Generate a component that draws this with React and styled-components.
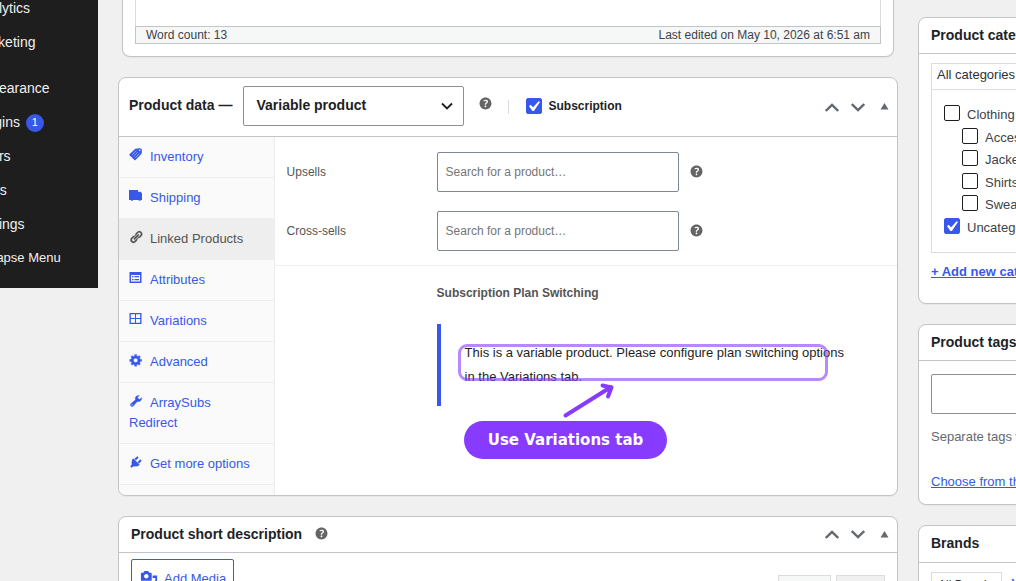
import React from "react";
import styled, { createGlobalStyle } from "styled-components";

const GlobalStyle = createGlobalStyle`
  *, *::before, *::after { box-sizing: border-box; }
  body {
    margin: 0;
    background: #f0f0f0;
    color: #3c434a;
    font: 13px/20px "Liberation Sans", Arial, sans-serif;
    overflow: hidden;
  }
  ul, h2, p { margin: 0; padding: 0; list-style: none; }
`;

const blue = "#3858e9";
const line = "#c3c4c7";

const Screen = styled.div`
  display: grid;
  grid-template-columns: 98px 780px 250px;
  column-gap: 20px;
  align-items: start;
  width: 1016px;
  height: 581px;
  overflow: hidden;
`;

/* Admin menu */
const AdminMenu = styled.nav`
  height: 288px;
  background: #1e1e1e;
  overflow: hidden;
`;
const MenuList = styled.ul`
  margin: -9px 0 0 -26px;
`;
const MenuItem = styled.li`
  display: flex;
  align-items: center;
  height: 34px;
  margin-top: ${(p) => (p.$spaced ? "12px" : 0)};
  color: #f0f0f1;
  font-size: ${(p) => (p.$small ? "13px" : "14px")};
  white-space: nowrap;
`;
const Count = styled.span`
  width: 18px;
  height: 18px;
  margin: 1px 0 0 6px;
  border-radius: 9px;
  background: ${blue};
  color: #fff;
  font-size: 11px;
  line-height: 17px;
  text-align: center;
`;

/* Boxes */
const MainColumn = styled.main`
  display: flex;
  flex-direction: column;
  gap: 20px;
`;
const SideColumn = styled.aside`
  display: flex;
  flex-direction: column;
  gap: 20px;
  padding-top: 17px;
`;
const Panel = styled.section`
  flex: none;
  height: ${(p) => p.$height}px;
  border: 1px solid ${line};
  border-radius: 8px;
  background: #fff;
  box-shadow: 0 1px 1px rgba(0, 0, 0, 0.04);
  overflow: hidden;
`;
const PanelHeader = styled.header`
  display: flex;
  align-items: center;
  height: ${(p) => p.$height || 36}px;
  padding-left: ${(p) => p.$inset || 12}px;
  border-bottom: 1px solid ${line};
`;
const Title = styled.h2`
  margin-top: ${(p) => p.$lift || -2}px;
  color: #1d2327;
  font-size: 14px;
  font-weight: 700;
  line-height: 20px;
  white-space: nowrap;
`;
const EditorPanel = styled(Panel)`
  margin: 0 4px;
  padding: 0 12px;
  border-top: 0;
  border-radius: 0 0 8px 8px;
`;
const EditorArea = styled.div`
  height: 26px;
  border: solid #dcdcde;
  border-width: 0 1px;
`;
const StatusBar = styled.div`
  display: flex;
  justify-content: space-between;
  height: 18px;
  padding: 0 10px;
  border: 1px solid ${line};
  background: #f6f7f7;
  color: #3c434a;
  font-size: 12px;
  line-height: 16px;
`;

/* Header controls */
const TypeSelect = styled.div`
  display: flex;
  align-items: center;
  justify-content: space-between;
  width: 221px;
  height: 40px;
  margin: -2px 15px 0 11px;
  padding: 0 10px 0 12px;
  border: 1px solid #8c8f94;
  border-radius: 2px;
  color: #1e1e1e;
  font-size: 14px;
  font-weight: 700;
  line-height: 20px;
  span { margin-top: -2px; }
`;
const Separator = styled.span`
  width: 1px;
  height: 14px;
  margin: 0 17px 0 16px;
  background: #dcdcde;
`;
const SubscriptionLabel = styled.label`
  display: flex;
  align-items: center;
  gap: 6px;
  margin-top: -2px;
  color: #1d2327;
  font-size: 12px;
  font-weight: 700;
`;
const HandleActions = styled.div`
  display: flex;
  align-items: center;
  gap: 12px;
  margin: 0 8px 0 auto;
  color: #646970;
  svg:last-child { margin: -1px 0 0 3px; }
`;
const HelpSvg = styled.svg`
  flex: none;
  display: block;
  width: 17px;
  height: 17px;
  margin: ${(p) => p.$margin || 0};
  fill: #646464;
`;
const Check = styled.span`
  flex: none;
  display: block;
  width: 16px;
  height: 16px;
  border: 1px solid ${(p) => (p.$on ? blue : "#1e1e1e")};
  border-radius: 2px;
  background: ${(p) => (p.$on ? blue : "#fff")};
  svg { display: block; width: 21px; height: 21px; margin: -3px 0 0 -4px; fill: #fff; }
`;

/* Product data */
const ProductBody = styled.div`
  display: grid;
  grid-template-columns: 156px 1fr;
  height: 358px;
`;
const Tabs = styled.ul`
  border-right: 1px solid #eee;
  background: #fafafa;
`;
const Tab = styled.li`
  padding: 10px 20px 10px 10px;
  border-bottom: 1px solid #eee;
  background: ${(p) => (p.$active ? "#eee" : "transparent")};
  color: ${(p) => (p.$active ? "#555" : blue)};
  svg {
    display: inline-block;
    width: 13px;
    height: 13px;
    margin-right: 8px;
    vertical-align: 0;
    fill: currentColor;
  }
  svg[viewBox="0 0 20 20"] {
    width: 14px;
    height: 14px;
    margin: 0 7.500px 0 -0.500px;
    vertical-align: -0.500px;
    stroke: currentColor;
    stroke-width: 0.4px;
  }
`;
const Fields = styled.div`
  display: flex;
  flex-direction: column;
  gap: 19px;
  padding: 15px 0 14px 11.6px;
  border-bottom: 1px solid #eee;
`;
const Field = styled.div`
  display: grid;
  grid-template-columns: 150.4px 242px 17px;
  align-items: center;
  color: #555;
  font-size: 12px;
`;
const SearchBox = styled.div`
  height: 40px;
  padding: 0 7.6px;
  border: 1px solid #7e8993;
  border-radius: 2px;
  color: #757575;
  line-height: 38px;
`;
const Switching = styled.div`
  padding: 17px 0 0 161px;
`;
const SwitchingTitle = styled.p`
  padding-left: 0.6px;
  color: #555;
  font-size: 12px;
  font-weight: 700;
`;
const Notice = styled.div`
  position: relative;
  height: 82px;
  margin: 21px 0 0 1px;
  padding: 17px 23.6px;
  border-left: 4px solid ${blue};
  color: #1e1e1e;
  line-height: 24px;
  white-space: nowrap;
`;
const Highlight = styled.span`
  position: absolute;
  left: 17px;
  top: 20px;
  width: 370px;
  height: 37px;
  border: 3px solid rgba(134, 59, 255, 0.6);
  border-radius: 9px;
`;
const Arrow = styled.svg`
  position: absolute;
  left: 119px;
  top: 56px;
  width: 60px;
  height: 40px;
  fill: none;
  stroke: #863bff;
  stroke-width: 4;
  stroke-linecap: round;
  stroke-linejoin: round;
`;
const Callout = styled.span`
  position: absolute;
  left: 23px;
  top: 97px;
  width: 203px;
  height: 38px;
  border-radius: 19px;
  background: #863bff;
  color: #fff;
  font: 700 15px/38px "DejaVu Sans", sans-serif;
  text-align: center;
`;

/* Short description editor */
const EditorTools = styled.div`
  display: flex;
  align-items: flex-start;
  padding: 6px 12px 0;
`;
const MediaButton = styled.div`
  display: flex;
  align-items: center;
  width: 103px;
  height: 40px;
  padding: 0 8px;
  border: 1px solid ${blue};
  border-radius: 2px;
  color: ${blue};
  white-space: nowrap;
  svg { flex: none; width: 18px; height: 18px; margin-right: 6px; fill: currentColor; }
`;
const EditorTabs = styled.div`
  display: flex;
  gap: 5px;
  margin: 16px 0 0 auto;
`;
const EditorTab = styled.span`
  width: ${(p) => p.$width}px;
  height: 28px;
  border: 1px solid #dcdcde;
  background: ${(p) => (p.$active ? "#f6f7f7" : "#f0f0f1")};
`;

/* Side boxes */
const SideBody = styled.div`
  padding: ${(p) => p.$top}px 12px 0;
  white-space: nowrap;
`;
const CategoryTabs = styled.div`
  height: 26px;
  padding: 1px 5px;
  border: 1px solid #dcdcde;
  border-bottom: 0;
  color: #2c3338;
`;
const CategoryBox = styled.ul`
  height: 164px;
  padding: 12px 12px;
  border: 1px solid #dcdcde;
`;
const Category = styled.li`
  display: flex;
  align-items: center;
  gap: 7px;
  height: 22.5px;
  margin-left: ${(p) => (p.$child ? 18 : 0)}px;
  span + span { padding-top: 4px; }
`;
const SideLink = styled.a`
  display: block;
  margin-top: ${(p) => p.$top}px;
  color: ${blue};
  font-weight: ${(p) => (p.$bold ? 700 : 400)};
  text-decoration: underline;
`;
const TagInput = styled.div`
  height: 40px;
  border: 1px solid #8c8f94;
  border-radius: 2px;
`;
const Hint = styled.p`
  margin-top: 13px;
  color: #646970;
`;
const BrandTabs = styled.div`
  display: flex;
  gap: 9px;
  color: ${blue};
  font-size: 12px;
  line-height: 24px;
`;
const BrandTab = styled.span`
  width: 71px;
  height: 30px;
  padding: 0 6px;
  border: 1px solid #dcdcde;
  color: #2c3338;
`;

const Help = ({ margin }) => (
  <HelpSvg viewBox="0 0 20 20" $margin={margin}>
    <path d="M17 10c0-3.87-3.14-7-7-7-3.87 0-7 3.13-7 7s3.13 7 7 7c3.86 0 7-3.13 7-7zm-6.3 1.48H9.14v-.43c0-.38.08-.7.24-.98s.46-.57.88-.89c.41-.29.68-.53.81-.71.14-.18.2-.39.2-.62 0-.25-.09-.44-.28-.58-.19-.13-.45-.19-.79-.19-.58 0-1.25.19-2 .57l-.64-1.28c.87-.49 1.8-.74 2.77-.74.81 0 1.45.2 1.92.58.48.39.71.91.71 1.55 0 .43-.09.8-.29 1.11-.19.32-.57.67-1.11 1.06-.38.28-.61.49-.71.63-.1.15-.15.34-.15.57v.35zm-1.47 2.74c-.18-.17-.27-.42-.27-.73 0-.33.08-.58.26-.75s.43-.25.77-.25c.32 0 .57.09.75.26s.27.42.27.74c0 .3-.09.55-.27.72-.18.18-.43.27-.75.27-.33 0-.58-.09-.76-.26z" />
  </HelpSvg>
);

const Checkbox = ({ on }) => (
  <Check $on={on}>
    {on && (
      <svg viewBox="0 0 20 20">
        <path d="M14.83 4.89l1.34.94-5.81 8.38H9.02L5.78 9.67l1.34-1.25 2.57 2.4z" />
      </svg>
    )}
  </Check>
);

const Handles = () => (
  <HandleActions>
    <svg width="14" height="9" viewBox="0 0 14 9" fill="none" stroke="currentColor" strokeWidth="2.4">
      <path d="M.8 8 7 2l6.200 6" />
    </svg>
    <svg width="14" height="9" viewBox="0 0 14 9" fill="none" stroke="currentColor" strokeWidth="2.4">
      <path d="M.8 1 7 7l6.200-6" />
    </svg>
    <svg width="9" height="7" viewBox="0 0 9 7" fill="currentColor">
      <path d="M4.500 0 8.500 6.500h-8z" />
    </svg>
  </HandleActions>
);

const icons = {
  tag: (
    <svg viewBox="0 0 13 13">
      <path d="M0 6.700 6.300.7 9.400.5 10.300 0 12.700 1 12.900 4.200 12.400 6 6 12.500z" />
      <path d="M3 6.800 7.300 2.700M4.600 8.300 8.700 4.200M6.200 9.800l4.300-4.200" stroke="#fafafa" strokeOpacity=".65" strokeWidth=".7" fill="none" />
      <circle cx="10.700" cy="2.300" r=".8" fill="#fafafa" />
    </svg>
  ),
  truck: (
    <svg viewBox="0 0 13 13">
      <path d="M0 1h9v1.800h2.700L13.300 5V11h-1.500a1.200 1.200 0 0 1-2.300 0H4.200a1.200 1.200 0 0 1-2.300 0H0z" />
    </svg>
  ),
  link: (
    <svg viewBox="0 0 20 20">
      <path d="M17.740 2.760c1.680 1.690 1.680 4.410 0 6.100l-1.530 1.520c-1.120 1.120-2.700 1.470-4.140 1.090l2.620-2.610.76-.77.76-.76c.84-.84.84-2.200 0-3.040-.84-.85-2.200-.85-3.040 0l-.77.76-3.380 3.380c-.37-1.440-.02-3.020 1.100-4.140l1.520-1.530c1.690-1.680 4.420-1.680 6.100 0zM8.590 13.430l5.340-5.340c.42-.42.42-1.100 0-1.520-.44-.43-1.130-.39-1.530 0l-5.330 5.340c-.42.42-.42 1.100 0 1.520.44.43 1.130.39 1.520 0zm-.76 2.290l4.140-4.150c.38 1.440.03 3.020-1.090 4.140l-1.520 1.530c-1.690 1.680-4.410 1.680-6.100 0-1.680-1.680-1.680-4.420 0-6.100l1.530-1.520c1.120-1.120 2.700-1.470 4.140-1.100l-4.140 4.150c-.85.84-.85 2.200 0 3.050.84.84 2.200.84 3.040 0z" />
    </svg>
  ),
  list: (
    <svg viewBox="0 0 13 13">
      <path fillRule="evenodd" d="M.5 1h12v11H.5zM2 4v6.500h9V4zm1 1h1.500v1.200H3zm2.500 0H10v1.200H5.500zM3 8h1.500v1.200H3zm2.500 0H10v1.200H5.500z" />
    </svg>
  ),
  grid: (
    <svg viewBox="0 0 13 13">
      <path fillRule="evenodd" d="M.5 1h12v11H.5zM1.800 2.300V6H6V2.300zm5.200 0V6h4.200V2.300zM1.800 7v3.700H6V7zm5.200 0v3.700h4.200V7z" />
    </svg>
  ),
  gear: (
    <svg viewBox="0 0 20 20">
      <path d="M18 12h-2.180c-.17.7-.44 1.350-.81 1.930l1.540 1.540-2.100 2.100-1.540-1.540c-.58.36-1.230.63-1.910.79V19H8v-2.180c-.68-.16-1.330-.43-1.910-.79l-1.540 1.540-2.120-2.120 1.540-1.540c-.36-.58-.63-1.230-.79-1.910H1V9.030h2.170c.16-.7.44-1.350.8-1.940L2.430 5.550l2.100-2.100 1.540 1.540c.58-.37 1.240-.64 1.930-.81V2h3v2.180c.68.16 1.330.43 1.910.79l1.540-1.540 2.120 2.120-1.540 1.540c.36.59.64 1.240.8 1.940H18V12zm-8.500 1.500c1.660 0 3-1.340 3-3s-1.340-3-3-3-3 1.340-3 3 1.340 3 3 3z" />
    </svg>
  ),
  wrench: (
    <svg viewBox="0 0 20 20">
      <path d="M16.680 9.770c-1.340 1.340-3.300 1.670-4.950.99l-5.410 6.520c-.99.99-2.590.99-3.580 0s-.99-2.590 0-3.570l6.520-5.420c-.68-1.650-.35-3.610.99-4.950 1.280-1.280 3.120-1.620 4.720-1.060l-2.890 2.890 2.820 2.820 2.860-2.870c.53 1.580.18 3.390-1.080 4.650zM3.810 16.210c.4.39 1.040.39 1.430 0 .4-.4.4-1.040 0-1.430-.39-.4-1.030-.4-1.430 0-.39.39-.39 1.030 0 1.430z" />
    </svg>
  ),
  plug: (
    <svg viewBox="0 0 20 20">
      <path d="M13.110 4.360L9.870 7.600 8 5.730l3.240-3.240c.35-.34 1.050-.2 1.560.32.52.51.66 1.210.31 1.550zm-8 1.770l.91-1.120 9.010 9.010-1.190.84c-.71.71-2.630 1.160-3.820 1.160H6.140L4.900 17.260c-.59.59-1.540.59-2.120 0-.59-.58-.59-1.530 0-2.120l1.240-1.240v-3.880c0-1.130.4-3.190 1.090-3.890zm7.260 3.970l3.240-3.240c.34-.35 1.040-.21 1.550.31.52.51.66 1.210.31 1.550l-3.240 3.250z" />
    </svg>
  ),
};

const tabs = [
  ["tag", "Inventory"],
  ["truck", "Shipping"],
  ["link", "Linked Products"],
  ["list", "Attributes"],
  ["grid", "Variations"],
  ["gear", "Advanced"],
  ["wrench", "ArraySubs Redirect"],
  ["plug", "Get more options"],
];

const categories = [
  { name: "Clothing" },
  { name: "Accessories", child: true },
  { name: "Jackets", child: true },
  { name: "Shirts", child: true },
  { name: "Sweaters", child: true },
  { name: "Uncategorized", on: true },
];

export default function App() {
  return (
    <Screen>
      <GlobalStyle />
      <AdminMenu>
        <MenuList>
          <MenuItem>Analytics</MenuItem>
          <MenuItem>Marketing</MenuItem>
          <MenuItem $spaced>Appearance</MenuItem>
          <MenuItem>
            Plugins <Count>1</Count>
          </MenuItem>
          <MenuItem>Users</MenuItem>
          <MenuItem>Tools</MenuItem>
          <MenuItem>Settings</MenuItem>
          <MenuItem $small>Collapse Menu</MenuItem>
        </MenuList>
      </AdminMenu>

      <MainColumn>
        <EditorPanel $height={57}>
          <EditorArea />
          <StatusBar>
            <span>Word count: 13</span>
            <span>Last edited on May 10, 2026 at 6:51 am</span>
          </StatusBar>
        </EditorPanel>

        <Panel $height={419}>
          <PanelHeader $height={59} $inset={10}>
            <Title $lift={-4}>Product data —</Title>
            <TypeSelect>
              <span>Variable product</span>
              <svg width="12" height="8" viewBox="0 0 12 8" fill="none" stroke="#1e1e1e" strokeWidth="1.800">
                <path d="M1 1.500 6 6.500l5-5" />
              </svg>
            </TypeSelect>
            <Help margin="-7px -2px 0 -2px" />
            <Separator />
            <SubscriptionLabel>
              <Checkbox on />
              Subscription
            </SubscriptionLabel>
            <Handles />
          </PanelHeader>
          <ProductBody>
            <Tabs>
              {tabs.map(([icon, label]) => (
                <Tab key={label} $active={icon === "link"}>
                  {icons[icon]}
                  {label}
                </Tab>
              ))}
            </Tabs>
            <div>
              <Fields>
                {["Upsells", "Cross-sells"].map((label) => (
                  <Field key={label}>
                    <span>{label}</span>
                    <SearchBox>Search for a product…</SearchBox>
                    <Help margin="-1px 0 0 9px" />
                  </Field>
                ))}
              </Fields>
              <Switching>
                <SwitchingTitle>Subscription Plan Switching</SwitchingTitle>
                <Notice>
                  This is a variable product. Please configure plan switching options
                  <br />
                  in the Variations tab.
                  <Highlight />
                  <Arrow viewBox="0 0 60 40">
                    <path d="M5.500 35.500 51 7M42.500 5.500 51.500 7.500 48 16.500" />
                  </Arrow>
                  <Callout>Use Variations tab</Callout>
                </Notice>
              </Switching>
            </div>
          </ProductBody>
        </Panel>

        <Panel $height={200}>
          <PanelHeader>
            <Title>Product short description</Title>
            <Help margin="-3px 0 0 10.500px" />
            <Handles />
          </PanelHeader>
          <EditorTools>
            <MediaButton>
              <svg viewBox="0 0 20 20">
                <path d="M13 11V4c0-.55-.45-1-1-1h-1.670L9 1H5L3.670 3H2c-.55 0-1 .45-1 1v7c0 .55.45 1 1 1h10c.55 0 1-.45 1-1zM7 4.500c1.380 0 2.500 1.120 2.500 2.500S8.380 9.500 7 9.500 4.500 8.380 4.500 7 5.620 4.500 7 4.500zM14 6h5v10.500c0 1.380-1.120 2.500-2.500 2.500S14 17.880 14 16.500s1.120-2.500 2.500-2.500c.17 0 .34.02.5.05V9h-3V6zm-4 8.050V13h2v3.500c0 1.380-1.120 2.500-2.500 2.500S7 17.880 7 16.500 8.120 14 9.500 14c.17 0 .34.02.5.05z" />
              </svg>
              Add Media
            </MediaButton>
            <EditorTabs>
              <EditorTab $width={53} $active />
              <EditorTab $width={49} />
            </EditorTabs>
          </EditorTools>
        </Panel>
      </MainColumn>

      <SideColumn>
        <Panel $height={287}>
          <PanelHeader>
            <Title>Product categories</Title>
          </PanelHeader>
          <SideBody $top={9}>
            <CategoryTabs>All categories</CategoryTabs>
            <CategoryBox>
              {categories.map((c) => (
                <Category key={c.name} $child={c.child}>
                  <Checkbox on={c.on} />
                  <span>{c.name}</span>
                </Category>
              ))}
            </CategoryBox>
            <SideLink $top={9} $bold>
              + Add new category
            </SideLink>
          </SideBody>
        </Panel>
        <Panel $height={181}>
          <PanelHeader>
            <Title>Product tags</Title>
          </PanelHeader>
          <SideBody $top={13}>
            <TagInput />
            <Hint>Separate tags with commas</Hint>
            <SideLink $top={25}>Choose from the most used tags</SideLink>
          </SideBody>
        </Panel>
        <Panel $height={200}>
          <PanelHeader $height={37}>
            <Title $lift={-3}>Brands</Title>
          </PanelHeader>
          <SideBody $top={9}>
            <BrandTabs>
              <BrandTab>All Brands</BrandTab>
              <span>Most Used</span>
            </BrandTabs>
          </SideBody>
        </Panel>
      </SideColumn>
    </Screen>
  );
}
